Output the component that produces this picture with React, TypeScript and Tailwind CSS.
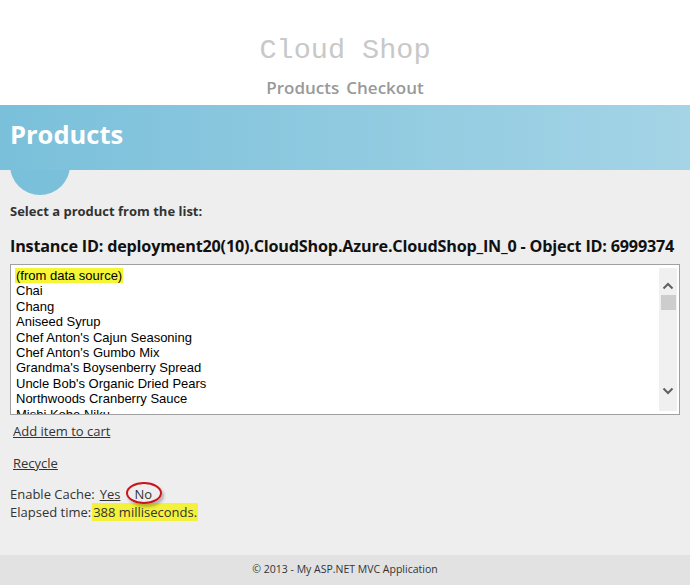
import React from "react";

const items = [
  "(from data source)",
  "Chai",
  "Chang",
  "Aniseed Syrup",
  "Chef Anton's Cajun Seasoning",
  "Chef Anton's Gumbo Mix",
  "Grandma's Boysenberry Spread",
  "Uncle Bob's Organic Dried Pears",
  "Northwoods Cranberry Sauce",
  "Mishi Kobe Niku",
];

export default function App() {
  return (
    <div className="w-[690px] h-[585px] flex flex-col bg-[#eeeeee] overflow-hidden" style={{ fontFamily: "'Open Sans', 'Noto Sans', sans-serif" }}>
      <header className="bg-white h-[105px] flex flex-col items-center shrink-0">
        <div className="mt-[33px] text-[28.5px] leading-[36px] text-[#c8c8c8]" style={{ fontFamily: "'Liberation Mono', monospace" }}>
          Cloud Shop
        </div>
        <nav className="mt-[7px] flex gap-[7px] text-[17px] leading-[24px] font-semibold text-[#999999]">
          <span>Products</span>
          <span>Checkout</span>
        </nav>
      </header>
      <section className="h-[65px] shrink-0 bg-gradient-to-r from-[#7ac0da] to-[#a4d4e6] flex items-center px-[10px]">
        <h1 className="text-[25.5px] font-bold text-white leading-none -mt-[6px]">Products</h1>
      </section>
      <main className="relative flex-1 px-[10px] pt-[32px] text-[#333]">
        <div className="absolute left-[10px] top-0 w-[60px] h-[25px] overflow-hidden">
          <div className="w-[60px] h-[60px] -mt-[35px] rounded-full bg-[#7ac0da]"></div>
        </div>
        <div className="text-[13px] font-bold leading-[18px] text-[#333]">Select a product from the list:</div>
        <div className="mt-[16px] text-[16.2px] font-bold leading-[20px] text-[#111] whitespace-nowrap tracking-[-0.2px]">
          Instance ID: deployment20(10).CloudShop.Azure.CloudShop_IN_0 - Object ID: 6999374
        </div>
        <div className="mt-[8px] relative h-[151px] border border-[#a0a0a0] bg-white overflow-hidden">
          <ul className="pt-[3px] pl-[5px] text-[13px] leading-[15.4px] text-black" style={{ fontFamily: "'Liberation Sans', Arial, sans-serif" }}>
            {items.map((it, i) => (
              <li key={i}>
                {i === 0 ? <span className="bg-[#f5f536] px-[1px] -ml-[1px]">{it}</span> : it}
              </li>
            ))}
          </ul>
          <div className="absolute right-[2px] top-[3px] bottom-[3px] w-[18px] bg-[#f0f0f0] flex flex-col items-center">
            <svg className="mt-[14px]" width="12" height="8" viewBox="0 0 12 8">
              <path d="M1.5 6.5 L6 2 L10.5 6.5" fill="none" stroke="#606060" strokeWidth="2" />
            </svg>
            <div className="mt-[5px] w-[15px] h-[15px] bg-[#cdcdcd]"></div>
            <div className="flex-1"></div>
            <svg className="mb-[16px]" width="12" height="8" viewBox="0 0 12 8">
              <path d="M1.5 1.5 L6 6 L10.5 1.5" fill="none" stroke="#606060" strokeWidth="2" />
            </svg>
          </div>
        </div>
        <div className="mt-[7px] pl-[3px] text-[13px] leading-[18px] text-[#333]">
          <span className="underline">Add item to cart</span>
        </div>
        <div className="mt-[14px] pl-[3px] text-[13px] leading-[18px] text-[#333]">
          <span className="underline">Recycle</span>
        </div>
        <div className="mt-[13px] text-[13px] leading-[18px] text-[#333] flex items-center">
          <span>Enable Cache:</span>
          <span className="ml-[5px] underline">Yes</span>
          <span className="relative ml-[14px]">
            No
            <span className="absolute -left-[8px] -top-[3px] w-[36px] h-[22px] rounded-[50%] border-2 border-[#c8161d] shadow-[2px_3px_3px_rgba(0,0,0,0.25)]"></span>
          </span>
        </div>
        <div className="text-[13px] leading-[18px] text-[#333]">
          Elapsed time:<span className="ml-[1px] bg-[#f3f13a] px-[1px]">388 milliseconds.</span>
        </div>
      </main>
      <footer className="h-[30px] shrink-0 bg-[#e2e2e2] flex items-center justify-center text-[10.5px] text-[#333]">
        © 2013 - My ASP.NET MVC Application
      </footer>
    </div>
  );
}
